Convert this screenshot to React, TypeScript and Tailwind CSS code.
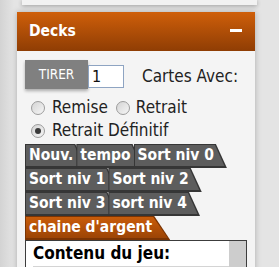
import React from 'react';

const font = { fontFamily: '"DejaVu Sans Condensed", "DejaVu Sans", sans-serif' };

interface TabProps {
  label: string;
  first?: boolean;
}

const Tab: React.FC<TabProps> = ({ label, first = false }) => {
  return (
    <div
      className={`${first ? '' : '-ml-[10px]'} h-[24px] shrink-0 bg-[#363636] pl-px pt-px pb-[2px] [clip-path:polygon(0_0,calc(100%_-_11px)_0,100%_100%,0_100%)]`}
    >
      <div className="h-full bg-[#5d5d5d] pl-[3px] pr-[13px] text-[15.5px] font-bold leading-[21px] text-white whitespace-nowrap [clip-path:polygon(0_0,calc(100%_-_12px)_0,calc(100%_-_2.5px)_100%,0_100%)]">
        {label}
      </div>
    </div>
  );
};

const Radio: React.FC<{ checked?: boolean }> = ({ checked = false }) => (
  <span className="flex h-[14px] w-[14px] shrink-0 items-center justify-center rounded-full border border-[#9c9c9c] bg-[linear-gradient(135deg,#d4d4d4,#f6f6f6)]">
    {checked && <span className="h-[6px] w-[6px] rounded-full bg-[#3a3a3a]" />}
  </span>
);

const rows = [
  ['Nouv.', 'tempo', 'Sort niv 0'],
  ['Sort niv 1', 'Sort niv 2'],
  ['Sort niv 3', 'sort niv 4'],
];

export default function App() {
  return (
    <div
      className="h-[267px] w-[279px] overflow-hidden bg-[linear-gradient(90deg,#d3d3d3_0px,#e4e4e4_14px,#e4e4e4_100%)]"
      style={font}
    >
      <div className="ml-[22px] h-[5px] w-[235px] bg-[#f2f2f2] shadow-[0_1px_4px_rgba(0,0,0,0.3)]" />

      <div className="ml-[17px] mt-[7px] w-[238px] bg-[#f4f4f4] shadow-[0_0_6px_rgba(0,0,0,0.25)]">
        <div className="flex h-[39px] items-center justify-between bg-[linear-gradient(#cf5f0a,#8f3d04)] pl-[12px] pr-[13px]">
          <span className="text-[15.5px] font-bold text-white">Decks</span>
          <span className="-mt-[2px] h-[3px] w-[12px] bg-white" />
        </div>

        <div className="pl-[8px] pr-[8px] pt-[9px]">
          <div className="flex items-start">
            <button className="h-[29px] w-[63px] bg-[#808080] text-[13.5px] text-white shadow-[0_2px_3px_rgba(0,0,0,0.3)]">
              TIRER
            </button>
            <div className="mt-[5px] h-[23px] w-[36px] border border-[#8ea4c2] bg-white pl-[3px] text-[16px] leading-[21px] text-[#111]">
              1
            </div>
            <span className="ml-[18px] mt-[5px] text-[17px] leading-[23px] text-[#222]">Cartes Avec:</span>
          </div>

          <div className="mt-[7px] flex h-[23px] items-center pl-[6px] text-[17px] text-[#222]">
            <Radio />
            <span className="ml-[7px]">Remise</span>
            <span className="ml-[8px]">
              <Radio />
            </span>
            <span className="ml-[6px]">Retrait</span>
          </div>
          <div className="flex h-[23px] items-center pl-[6px] text-[17px] text-[#222]">
            <Radio checked />
            <span className="ml-[7px]">Retrait Définitif</span>
          </div>

          <div className="mt-[2px]">
            {rows.map((row, i) => (
              <div key={i} className="flex">
                {row.map((label, j) => (
                  <Tab key={label} label={label} first={j === 0} />
                ))}
              </div>
            ))}
            <div className="flex">
              <div className="h-[24px] bg-[#7a3404] pl-px pt-px pb-[2px] [clip-path:polygon(0_0,calc(100%_-_16px)_0,100%_100%,0_100%)]">
                <div className="h-full bg-[linear-gradient(#c95c0a,#9c4405)] pl-[3px] pr-[18px] text-[15.5px] font-bold leading-[21px] text-white whitespace-nowrap [clip-path:polygon(0_0,calc(100%_-_17px)_0,calc(100%_-_2.5px)_100%,0_100%)]">
                  chaine d'argent
                </div>
              </div>
            </div>
          </div>

          <div className="flex h-[60px] w-[222px] border border-[#3c3c3c] bg-white">
            <div className="flex-1 pl-[7px] pt-[2px]">
              <div className="text-[17px] font-bold leading-[21px] text-black">Contenu du jeu:</div>
              <div className="mt-[2px] h-[20px] border-t border-[#d4d4d4]" />
            </div>
            <div className="w-[17px] bg-[#cdcdcd]" />
          </div>
        </div>
      </div>
    </div>
  );
}
